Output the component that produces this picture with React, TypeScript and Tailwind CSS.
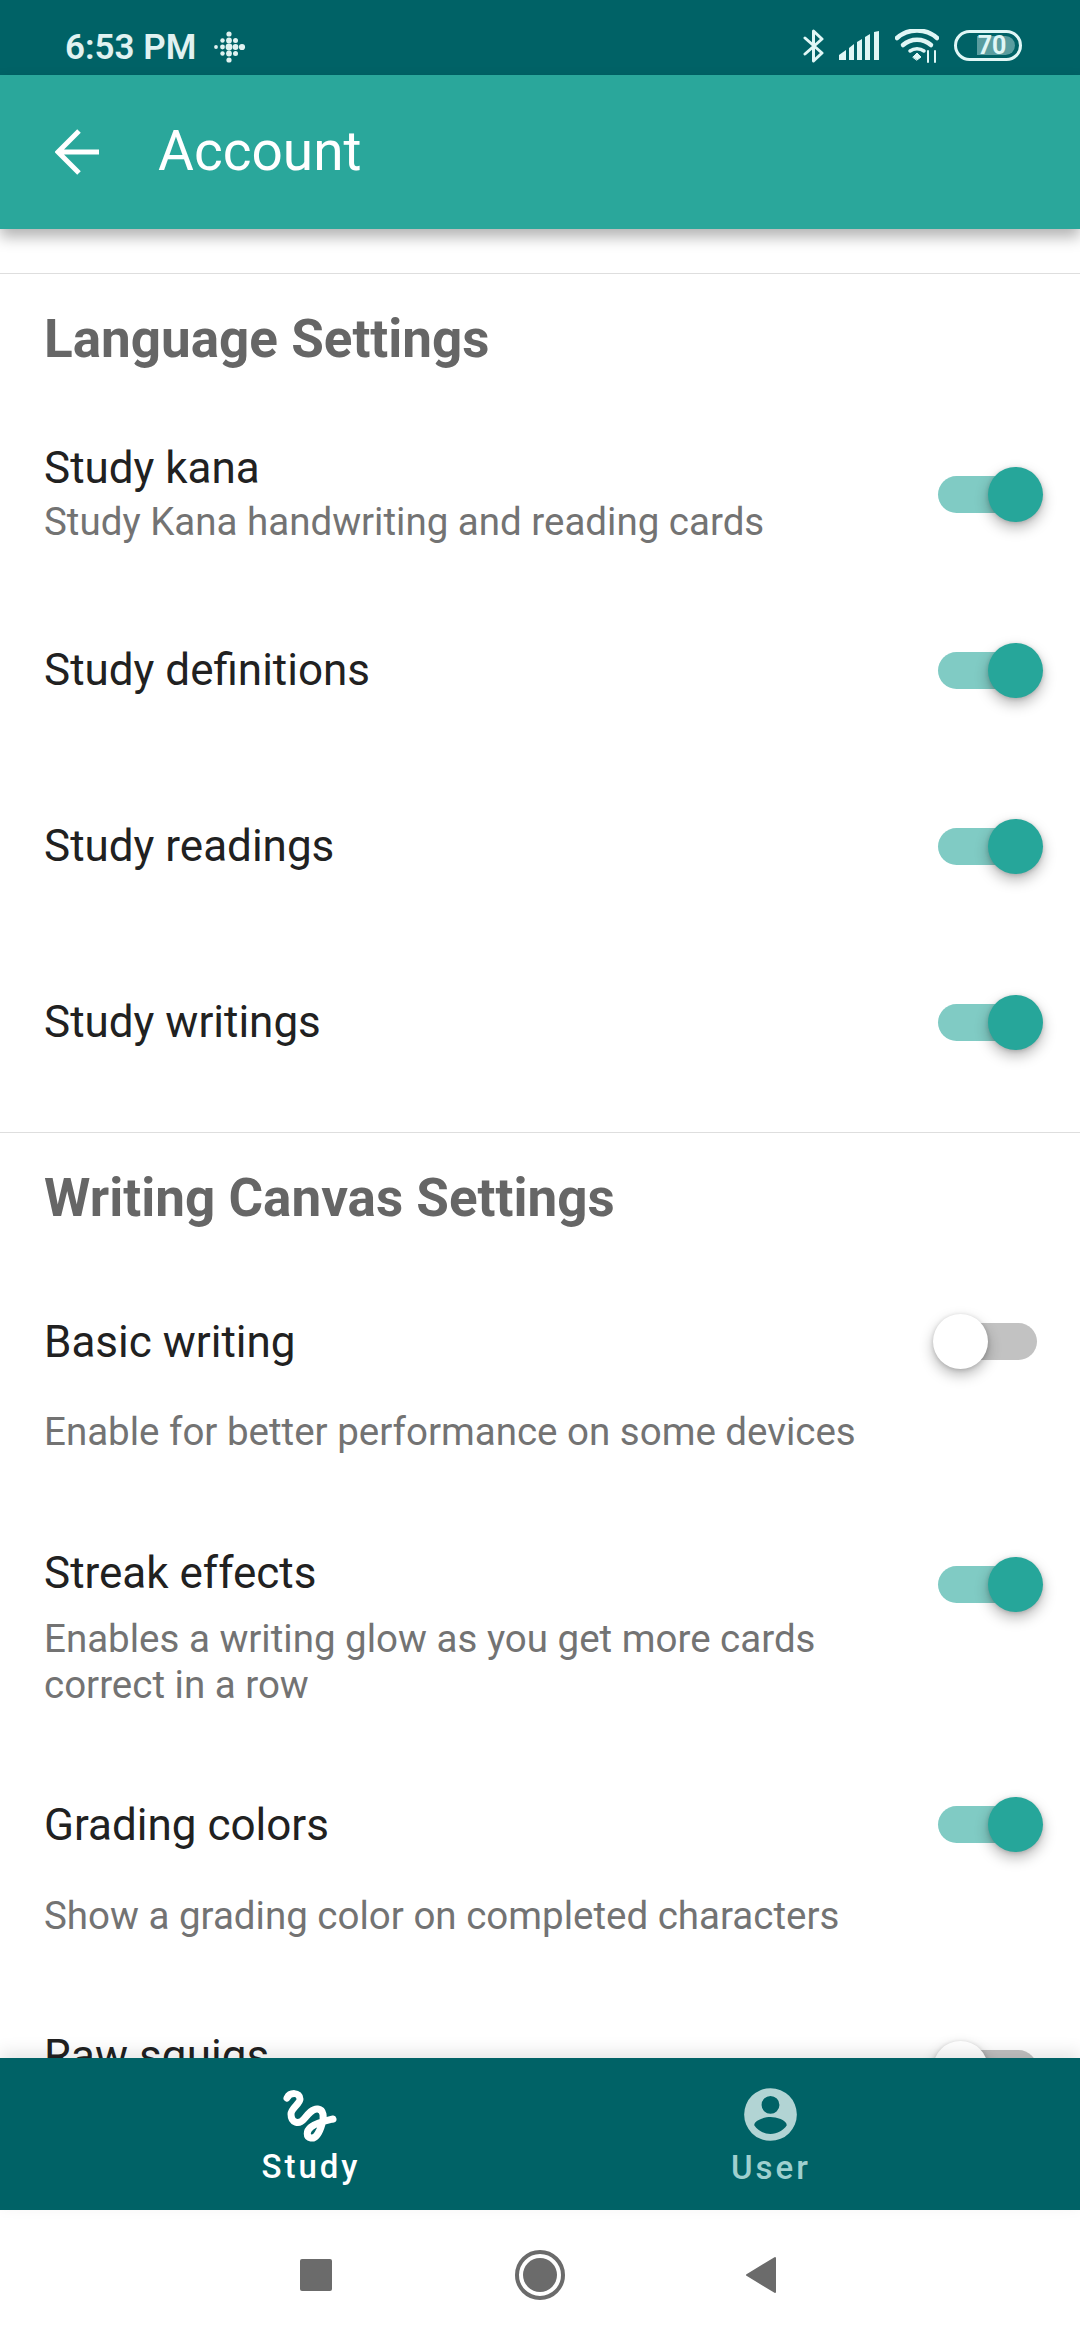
import React from "react";

function Toggle({ on, className = "" }: { on: boolean; className?: string }) {
  return (
    <div className={`relative w-[110px] h-[55px] shrink-0 ${className}`}>
      <div className={`absolute left-[5px] top-[9px] w-[99px] h-[37px] rounded-full ${on ? "bg-[#80cbc4]" : "bg-[#c2c2c2]"}`} />
      <div
        className={`absolute top-0 w-[55px] h-[55px] rounded-full shadow-[0_6px_14px_rgba(0,0,0,0.28),0_1px_4px_rgba(0,0,0,0.16)] ${
          on ? "left-[55px] bg-[#26a69a]" : "left-0 bg-white"
        }`}
      />
    </div>
  );
}

function Row({
  title,
  subs = [],
  on,
  rowClass,
  toggleClass = "",
  subClass = "",
}: {
  title: string;
  subs?: string[];
  on: boolean;
  rowClass: string;
  toggleClass?: string;
  subClass?: string;
}) {
  return (
    <div className={`flex justify-between pl-[44px] pr-[37px] shrink-0 ${rowClass}`}>
      <div className="flex flex-col">
        <div className="text-[44px] leading-[52px] text-[#212121]">{title}</div>
        <div className={subClass}>
          {subs.map((s) => (
            <div key={s} className="text-[38.5px] leading-[46px] text-[#737373]">
              {s}
            </div>
          ))}
        </div>
      </div>
      <Toggle on={on} className={toggleClass} />
    </div>
  );
}

function SectionTitle({ children }: { children: React.ReactNode }) {
  return (
    <div className="h-[132px] shrink-0 flex items-center pl-[44px] text-[53px] font-bold text-[#666666]">
      {children}
    </div>
  );
}

function FitbitIcon() {
  const dots: [number, number, number][] = [
    [0, -13, 2.6], [0, -6.5, 2.9], [0, 0, 3.4], [0, 6.5, 2.9], [0, 13, 2.6],
    [6.5, -6.5, 2.5], [6.5, 0, 2.9], [6.5, 6.5, 2.5],
    [-6.5, -6.5, 2.2], [-6.5, 0, 2.4], [-6.5, 6.5, 2.2],
    [-13, 0, 1.9], [13, 0, 3.1],
  ];
  return (
    <svg width="34" height="34" viewBox="-17 -17 34 34" className="ml-[16px]">
      {dots.map(([x, y, r], i) => (
        <circle key={i} cx={x} cy={y} r={r} fill="#e0f2f1" />
      ))}
    </svg>
  );
}

function StatusIcons() {
  return (
    <div className="flex items-center text-[#e0f7f6]">
      <svg width="22" height="34" viewBox="0 0 22 34" fill="none" stroke="currentColor" strokeWidth="3" strokeLinejoin="round" strokeLinecap="round">
        <path d="M2 9 L19 24 L10.5 32 V2 L19 10 L2 25" />
      </svg>
      <svg width="40" height="30" viewBox="0 0 40 30" className="ml-[14px]" fill="currentColor">
        <path d="M0 24 L7 19 V29 H0 Z" />
        <path d="M10 17 L15 13 V29 H10 Z" />
        <path d="M18 11 L23 8 V29 H18 Z" />
        <path d="M26 6 L31 3 V29 H26 Z" />
        <path d="M35 1 L40 0 V29 H35 Z" />
      </svg>
      <svg width="44" height="34" viewBox="0 0 44 34" className="ml-[16px]" fill="none" stroke="currentColor" strokeLinecap="round">
        <path d="M2 9 C13 -1 31 -1 42 9" strokeWidth="4.5" />
        <path d="M8 16 C16 9 28 9 36 16" strokeWidth="4.5" />
        <path d="M15 22 C19 19 25 19 29 22" strokeWidth="3.5" />
        <path d="M18 28 L22 24 L26 28 L22 31 Z" fill="currentColor" strokeWidth="1" />
        <path d="M33 22 V33 M40 22 V33" strokeWidth="2" />
      </svg>
      <div className="relative ml-[15px] w-[68px] h-[31px] rounded-full border-[3px] border-[#e0f7f6] overflow-hidden flex items-center justify-center">
        <div className="absolute left-[20px] top-[3px] bottom-[3px] w-[38px] rounded-r-full bg-[#e0f7f6]/40" />
        <span className="relative ml-[8px] text-[25px] leading-none font-bold text-[#e0f7f6]">70</span>
      </div>
    </div>
  );
}

function StudyIcon() {
  return (
    <svg width="60" height="56" viewBox="10 8 60 56" fill="none" stroke="#ffffff" strokeWidth="7" strokeLinecap="round" strokeLinejoin="round">
      <path d="M17 17 C20 11 30 11 30 18 C30 23 21 27 21 33 C21 42 29 44 34 38 C38 33 43 27 48 28 C54 29 54 36 52 43 C50 50 46 58 41 57 C36 56 36 50 41 46 C46 42 55 40 63 38" />
    </svg>
  );
}

function UserIcon() {
  return (
    <svg width="55" height="55" viewBox="0 0 24 24" fill="#b2d4d4">
      <path d="M12 0.5a11.5 11.5 0 1 0 0 23 11.5 11.5 0 0 0 0-23zm0 3.4a3.9 3.9 0 1 1 0 7.8 3.9 3.9 0 0 1 0-7.8zm0 16.6c-3 0-5.6-1.5-7.1-3.8 0-2.4 4.7-3.6 7.1-3.6s7.1 1.2 7.1 3.6c-1.5 2.3-4.1 3.8-7.1 3.8z" />
    </svg>
  );
}

export default function App() {
  return (
    <div className="w-[1080px] h-[2340px] flex flex-col bg-white overflow-hidden font-['Roboto',sans-serif]">
      <div className="h-[75px] shrink-0 bg-[#006266] flex items-center justify-between pl-[65px] pr-[58px] pt-[20px] pb-[4px]">
        <div className="flex items-center pt-[3px]">
          <span className="text-[35px] leading-none font-semibold text-[#e0f2f1]">6:53 PM</span>
          <FitbitIcon />
        </div>
        <StatusIcons />
      </div>

      <div className="relative z-10 h-[154px] shrink-0 bg-[#2aa79b] flex items-center shadow-[0_8px_14px_rgba(0,0,0,0.3)]">
        <svg width="46" height="46" viewBox="0 0 46 46" className="ml-[55px]" fill="none" stroke="#ffffff" strokeWidth="5">
          <path d="M44 23 H3 M24 2 L3 23 L24 44" />
        </svg>
        <span className="ml-[57px] mb-[2px] text-[55px] leading-none text-white">Account</span>
      </div>

      <div className="flex-1 min-h-0 overflow-hidden flex flex-col pt-[44px]">
        <div className="h-[1px] shrink-0 bg-[#dedede]" />
        <SectionTitle>Language Settings</SectionTitle>
        <Row
          title="Study kana"
          subs={["Study Kana handwriting and reading cards"]}
          on
          rowClass="h-[176px] pt-[36px] items-start"
          toggleClass="mt-[25px]"
          subClass="mt-[5px]"
        />
        <Row title="Study definitions" on rowClass="h-[176px] items-center" />
        <Row title="Study readings" on rowClass="h-[176px] items-center" />
        <Row title="Study writings" on rowClass="h-[176px] items-center" />
        <div className="h-[1px] shrink-0 bg-[#dedede] mt-[22px]" />
        <SectionTitle>Writing Canvas Settings</SectionTitle>
        <Row
          title="Basic writing"
          subs={["Enable for better performance on some devices"]}
          on={false}
          rowClass="h-[264px] pt-[51px] items-start"
          toggleClass="mt-[-2px]"
          subClass="mt-[41px]"
        />
        <Row
          title="Streak effects"
          subs={["Enables a writing glow as you get more cards", "correct in a row"]}
          on
          rowClass="h-[242px] pt-[18px] items-start"
          toggleClass="mt-[10px]"
          subClass="mt-[17px]"
        />
        <Row
          title="Grading colors"
          subs={["Show a grading color on completed characters"]}
          on
          rowClass="h-[259px] pt-[28px] items-start"
          toggleClass="mt-[-2px]"
          subClass="mt-[42px]"
        />
        <Row title="Raw squigs" on={false} rowClass="h-[120px] items-start" toggleClass="mt-[11px]" />
      </div>

      <div className="relative z-10 h-[152px] shrink-0 bg-[#006266] flex px-[80px] shadow-[0_-6px_16px_rgba(0,0,0,0.1)]">
        <div className="flex-1 flex flex-col items-center pt-[31px]">
          <StudyIcon />
          <span className="mt-[2px] ml-[2px] text-[33px] leading-[40px] font-medium tracking-[3px] text-white">Study</span>
        </div>
        <div className="flex-1 flex flex-col items-center pt-[29px]">
          <UserIcon />
          <span className="mt-[6px] ml-[2px] text-[33px] leading-[40px] font-medium tracking-[3px] text-[#9fd0cf]">User</span>
        </div>
      </div>

      <div className="h-[130px] shrink-0 bg-white flex items-center">
        <div className="ml-[300px] w-[32px] h-[32px] rounded-[2px] bg-[#6b6b6b]" />
        <svg width="50" height="50" viewBox="0 0 50 50" className="ml-[183px]">
          <circle cx="25" cy="25" r="23" fill="none" stroke="#6b6b6b" strokeWidth="4" />
          <circle cx="25" cy="25" r="17" fill="#6b6b6b" />
        </svg>
        <svg width="32" height="38" viewBox="0 0 32 38" className="ml-[180px]">
          <path d="M30 2 V36 L2 19 Z" fill="#6b6b6b" stroke="#6b6b6b" strokeWidth="2" strokeLinejoin="round" />
        </svg>
      </div>
    </div>
  );
}
